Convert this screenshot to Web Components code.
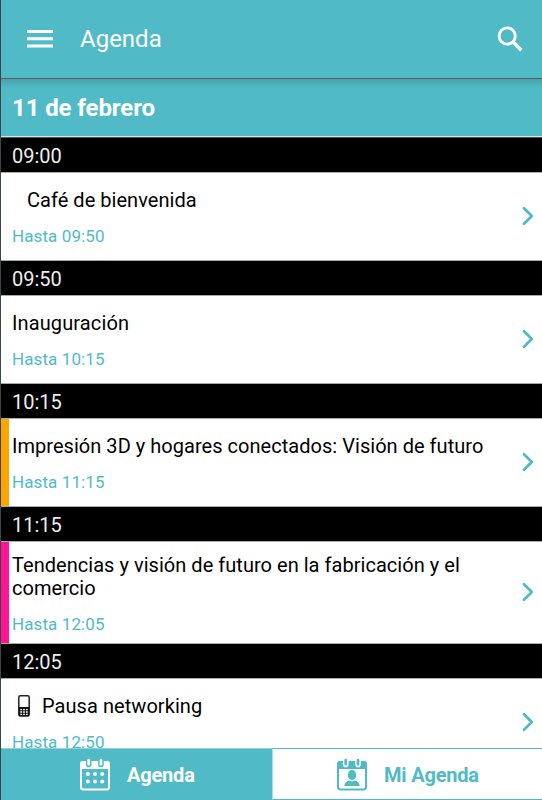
<!DOCTYPE html>
<html lang="es">
<head>
<meta charset="utf-8">
<meta name="viewport" content="width=device-width, initial-scale=1">
<title>Agenda</title>
<style>
  :root {
    --primary-color: #50bbc7;
    --line-color: #a9a9a9;
  }

  html, body {
    height: 100%;
    margin: 0;
    overflow: hidden;
  }

  body {
    font-family: Roboto, "Noto Sans", sans-serif;
    color: #000;
    background: #fff;
  }
</style>
</head>
<body>
<agenda-app>
  <app-bar slot="top" heading="Agenda"></app-bar>
  <day-header>11 de febrero</day-header>
  <agenda-slot time="09:00" until="09:50" style="--indent: 15px">Café de bienvenida</agenda-slot>
  <agenda-slot time="09:50" until="10:15" style="--title-spacing: .12px">Inauguración</agenda-slot>
  <agenda-slot time="10:15" until="11:15" style="--track-color: #ffa500">Impresión 3D y hogares conectados: Visión de futuro</agenda-slot>
  <agenda-slot time="11:15" until="12:05" style="--track-color: #ff1493; --row-height: 101px; --row-pad: 12px">Tendencias y visión de futuro en la fabricación y el comercio</agenda-slot>
  <agenda-slot time="12:05" until="12:50" style="--title-spacing: .06px"><phone-icon></phone-icon>Pausa networking</agenda-slot>
  <tab-item slot="tabs" icon="dots" active>Agenda</tab-item>
  <tab-item slot="tabs" icon="person">Mi Agenda</tab-item>
</agenda-app>

<script>
class AgendaApp extends HTMLElement {
  constructor() {
    super();
    this.attachShadow({ mode: 'open' });
    this.shadowRoot.innerHTML = `
      <style>
        :host {
          display: flex;
          flex-direction: column;
          box-sizing: border-box;
          height: 800px;
          border-left: 1px solid #3c4547;
        }
        main {
          flex: 1;
          min-height: 0;
          overflow: hidden;
        }
        nav {
          display: grid;
          grid-template-columns: 271px 1fr;
          height: 52px;
          flex: none;
        }
      </style>
      <slot name="top"></slot>
      <main><slot></slot></main>
      <nav><slot name="tabs"></slot></nav>
    `;
  }
}

class AppBar extends HTMLElement {
  constructor() {
    super();
    this.attachShadow({ mode: 'open' });
    this.shadowRoot.innerHTML = `
      <style>
        :host {
          display: flex;
          align-items: center;
          flex: none;
          box-sizing: border-box;
          height: 79px;
          padding: 0 18px 1px 26px;
          background: var(--primary-color);
          border-bottom: 1px solid #68585c;
          color: #fff;
        }
        h1 {
          flex: 1;
          margin: 1px 0 0 27px;
          font-size: 24px;
          font-weight: 400;
          line-height: 28px;
        }
        svg { display: block; }
      </style>
      <svg width="26" height="18" viewBox="0 0 26 18" fill="#fff">
        <path d="M0 0h26v3H0zM0 7.2h26v3H0zM0 14.4h26v3H0z"/>
      </svg>
      <h1></h1>
      <svg width="27" height="26" viewBox="0 0 27 26" fill="none" stroke="#fff">
        <circle cx="10.200" cy="10" r="8.100" stroke-width="2.9"/>
        <path d="M15.8 15.8l8.500 8.500" stroke-width="3.4"/>
      </svg>
    `;
  }

  connectedCallback() {
    this.shadowRoot.querySelector('h1').textContent = this.getAttribute('heading');
  }
}

class DayHeader extends HTMLElement {
  constructor() {
    super();
    this.attachShadow({ mode: 'open' });
    this.shadowRoot.innerHTML = `
      <style>
        :host {
          display: block;
          box-sizing: border-box;
          height: 59px;
          padding: 15px 11px 0;
          background: linear-gradient(rgba(0, 0, 0, .13), transparent 9px) var(--primary-color);
          border-bottom: 1px solid #565656;
          box-shadow: inset 0 -1px #d5e3e4;
          color: #fff;
          font-size: 24px;
          font-weight: 700;
          line-height: 28px;
          letter-spacing: -.1px;
        }
      </style>
      <slot></slot>
    `;
  }
}

class AgendaSlot extends HTMLElement {
  constructor() {
    super();
    this.attachShadow({ mode: 'open' });
    this.shadowRoot.innerHTML = `
      <style>
        :host { display: block; }
        .time {
          height: 34px;
          padding-left: 11px;
          background: #000;
          border-bottom: 1px solid var(--line-color);
          color: #eee;
          font-size: 20px;
          line-height: 37px;
        }
        .row {
          display: flex;
          align-items: center;
          box-sizing: border-box;
          height: calc(var(--row-height, 87px) + 1px);
          padding-right: 8px;
          border-bottom: 1px solid var(--line-color);
          background: #fff;
        }
        .track {
          align-self: stretch;
          width: 8px;
          margin-right: 3px;
          background: var(--track-color, transparent);
        }
        .text {
          flex: 1;
          align-self: flex-start;
          padding-top: var(--row-pad, 16px);
        }
        .title {
          padding-left: var(--indent, 0);
          width: 480px;
          font-size: 20px;
          line-height: 23px;
          letter-spacing: var(--title-spacing, .035px);
        }
        .until {
          margin-top: 14px;
          color: var(--primary-color);
          font-size: 17px;
          line-height: 20px;
          letter-spacing: .1px;
        }
        svg {
          flex: none;
          margin-bottom: 1px;
        }
      </style>
      <div class="time"></div>
      <div class="row">
        <div class="track"></div>
        <div class="text">
          <div class="title"><slot></slot></div>
          <div class="until"></div>
        </div>
        <svg width="12" height="20" viewBox="0 0 12 20" fill="none" stroke="#50bbc7" stroke-width="2.7" stroke-linecap="round" stroke-linejoin="round">
          <path d="M2 2.2l7.8 7.8L2 17.8"/>
        </svg>
      </div>
    `;
  }

  connectedCallback() {
    this.shadowRoot.querySelector('.time').textContent = this.getAttribute('time');
    this.shadowRoot.querySelector('.until').textContent = 'Hasta ' + this.getAttribute('until');
  }
}

class PhoneIcon extends HTMLElement {
  constructor() {
    super();
    this.attachShadow({ mode: 'open' });
    this.shadowRoot.innerHTML = `
      <style>
        :host {
          display: inline-block;
          width: 30px;
          height: 22px;
          vertical-align: -4px;
        }
        svg { display: block; margin-left: 6px; }
      </style>
      <svg width="12" height="22" viewBox="0 0 12 22">
        <rect x=".8" y=".8" width="10.4" height="20.2" rx="1.5" fill="#fff" stroke="#222" stroke-width="1.5"/>
        <path d="M1 12h10v9H1z" fill="#111"/>
        <path d="M2.3 14.7h7.4M2.3 17h7.4M2.3 19.3h7.4" stroke="#fff" stroke-width="1.3" stroke-dasharray="1.8 1"/>
      </svg>
    `;
  }
}

class TabItem extends HTMLElement {
  constructor() {
    super();
    this.attachShadow({ mode: 'open' });
    this.shadowRoot.innerHTML = `
      <style>
        :host {
          display: flex;
          align-items: center;
          box-sizing: border-box;
          padding: 1px 0 0 62.5px;
          border: 1px solid var(--primary-color);
          border-left-color: #a8dde3;
          border-right: 0;
          background: #fff;
          color: var(--primary-color);
          --ink: #50bbc7;
          --paper: #fff;
        }
        :host([active]) {
          padding-left: 76.5px;
          border-color: var(--primary-color);
          border-top-color: #8fd2da;
          background: var(--primary-color);
          color: #fff;
          --ink: #fff;
          --paper: #50bbc7;
        }
        svg { margin-right: 16.5px; }
        span {
          font-size: 20px;
          font-weight: 700;
          line-height: 24px;
          letter-spacing: -.2px;
        }
        .dots, .person { display: none; fill: var(--ink); }
        :host([icon="dots"]) .dots,
        :host([icon="person"]) .person { display: block; }
      </style>
      <svg width="32" height="33" viewBox="0 0 32 33">
        <rect x="2" y="4" width="28" height="27.5" rx="2.5" fill="var(--paper)" stroke="var(--ink)" stroke-width="2"/>
        <path d="M1 11V6q0-3 3-3h24q3 0 3 3v5z" fill="var(--ink)"/>
        <path d="M9.7 3v3.4M22 3v3.4" stroke="var(--paper)" stroke-width="5.6" stroke-linecap="round"/>
        <path d="M9.7 2.2v4M22 2.2v4" stroke="var(--ink)" stroke-width="2.7" stroke-linecap="round"/>
        <g class="dots">
          <circle cx="8.8" cy="16" r="2"/><circle cx="16" cy="16" r="2"/><circle cx="23.2" cy="16" r="2"/>
          <circle cx="8.8" cy="23.4" r="2"/><circle cx="16" cy="23.4" r="2"/><circle cx="23.2" cy="23.4" r="2"/>
        </g>
        <g class="person">
          <ellipse cx="16" cy="17" rx="4.2" ry="5"/>
          <path d="M8.2 28q.3-4.200 4.800-5.600l3 1 3-1q4.500 1.400 4.800 5.600z"/>
        </g>
      </svg>
      <span><slot></slot></span>
    `;
  }
}

customElements.define('agenda-app', AgendaApp);
customElements.define('app-bar', AppBar);
customElements.define('day-header', DayHeader);
customElements.define('agenda-slot', AgendaSlot);
customElements.define('phone-icon', PhoneIcon);
customElements.define('tab-item', TabItem);
</script>
</body>
</html>
